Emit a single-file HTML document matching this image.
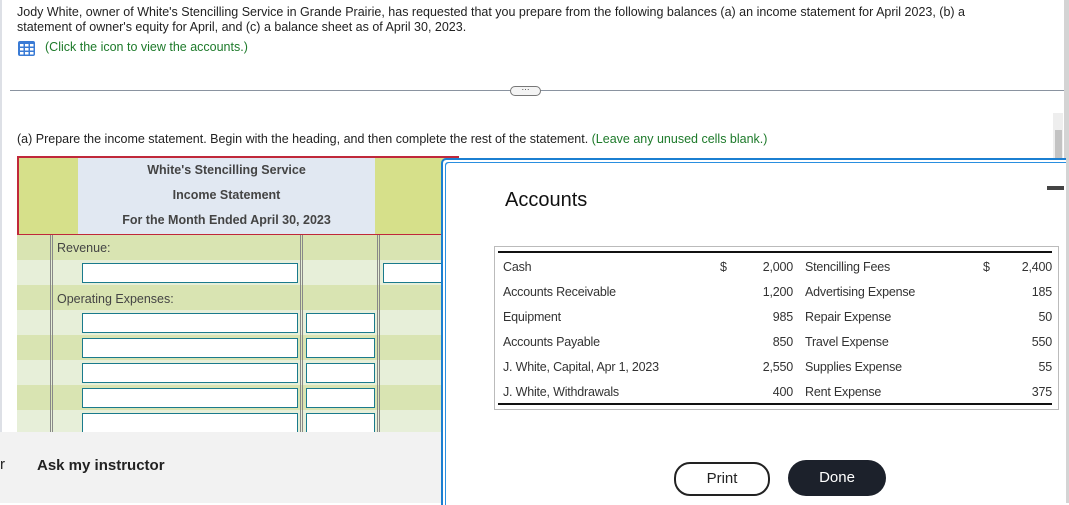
<!DOCTYPE html>
<html><head><style>
body{margin:0;width:1069px;height:503px;overflow:hidden;background:#fff;font-family:"Liberation Sans",Arial,sans-serif;position:relative;color:#222}
.a{position:absolute}
.row{position:absolute;left:17px;width:430px;height:25px}
.d{background:#d9e4b2}.l{background:#e7efd9}
.inp{position:absolute;height:18px;border:1px solid #1a7a8c;background:#fff}
.vl{position:absolute;top:235px;height:197px;width:1px;border-left:1px solid #888;border-right:1px solid #888}
.acc td{font-size:12.5px;color:#333;height:25px;padding:0;letter-spacing:-0.2px}
</style></head><body>
<div class="a" style="left:0;top:0;width:2px;height:432px;background:#dde0e6"></div>
<div class="a" style="left:17px;top:5px;font-size:12.5px;line-height:15px;width:1000px">Jody White, owner of White's Stencilling Service in Grande Prairie, has requested that you prepare from the following balances (a) an income statement for April 2023, (b) a statement of owner's equity for April, and (c) a balance sheet as of April 30, 2023.</div>
<svg class="a" style="left:18px;top:41px" width="17" height="15"><rect width="17" height="15" rx="2" fill="#3a7bd5"/><g fill="#fff"><rect x="2" y="3" width="3.5" height="2.5"/><rect x="7" y="3" width="3.5" height="2.5"/><rect x="12" y="3" width="3.5" height="2.5"/><rect x="2" y="7" width="3.5" height="2.5"/><rect x="7" y="7" width="3.5" height="2.5"/><rect x="12" y="7" width="3.5" height="2.5"/><rect x="2" y="11" width="3.5" height="2.5"/><rect x="7" y="11" width="3.5" height="2.5"/><rect x="12" y="11" width="3.5" height="2.5"/></g></svg>
<div class="a" style="left:45px;top:40px;font-size:12.5px;color:#1d7a2a">(Click the icon to view the accounts.)</div>
<div class="a" style="left:10px;top:90px;width:1055px;height:1px;background:#8a93a0"></div>
<div class="a" style="left:510px;top:86px;width:29px;height:8px;border:1px solid #777;border-radius:5px;background:#f4f4f4;font-size:8px;line-height:6px;text-align:center">···</div>
<div class="a" style="left:1053px;top:113px;width:10px;height:320px;background:#eee"></div>
<div class="a" style="left:1055px;top:130px;width:7px;height:30px;background:#c3c3c3"></div>
<div class="a" style="left:1064px;top:0;width:5px;height:503px;background:#d4d4d4"></div>
<div class="a" style="left:17px;top:132px;font-size:12.5px">(a) Prepare the income statement. Begin with the heading, and then complete the rest of the statement. <span style="color:#1d7a2a">(Leave any unused cells blank.)</span></div>
<div class="a" style="left:17px;top:156px;width:440px;height:76px;border:2px solid #c0283a;border-right:none;background:#d6e08a"></div>
<div class="a" style="left:78px;top:158px;width:297px;height:76px;background:#e1e8f2;text-align:center;font-weight:bold;font-size:12.5px;color:#444;line-height:25px">White's Stencilling Service<br>Income Statement<br>For the Month Ended April 30, 2023</div>
<div class="row d" style="top:235px"></div><div class="row l" style="top:260px"></div>
<div class="row d" style="top:285px"></div><div class="row l" style="top:310px"></div>
<div class="row d" style="top:335px"></div><div class="row l" style="top:360px"></div>
<div class="row d" style="top:385px"></div><div class="row l" style="top:410px;height:22px"></div>
<div class="vl" style="left:50px"></div><div class="vl" style="left:300px"></div><div class="vl" style="left:377px"></div>
<div class="a" style="left:57px;top:241px;font-size:12.5px;color:#444">Revenue:</div>
<div class="a" style="left:57px;top:292px;font-size:12.5px;color:#444">Operating Expenses:</div>
<div class="inp" style="left:82px;top:263px;width:214px"></div><div class="inp" style="left:383px;top:263px;width:60px"></div>
<div class="inp" style="left:82px;top:313px;width:214px"></div><div class="inp" style="left:306px;top:313px;width:67px"></div>
<div class="inp" style="left:82px;top:338px;width:214px"></div><div class="inp" style="left:306px;top:338px;width:67px"></div>
<div class="inp" style="left:82px;top:363px;width:214px"></div><div class="inp" style="left:306px;top:363px;width:67px"></div>
<div class="inp" style="left:82px;top:388px;width:214px"></div><div class="inp" style="left:306px;top:388px;width:67px"></div>
<div class="inp" style="left:82px;top:413px;width:214px;height:19px;border-bottom:none"></div><div class="inp" style="left:306px;top:413px;width:67px;height:19px;border-bottom:none"></div>
<div class="a" style="left:0;top:432px;width:441px;height:71px;background:#f2f2f2"></div>
<div class="a" style="left:0;top:456px;font-size:15px;color:#222">r</div>
<div class="a" style="left:37px;top:457px;font-size:15px;font-weight:bold;color:#222">Ask my instructor</div>
<div class="a" style="left:441px;top:158px;width:623px;height:345px;background:#fff;border-left:2px solid #1b7fd1;border-top:2px solid #1b7fd1;border-top-left-radius:5px;box-shadow:inset 2px 2px 0 #fff,inset 3px 3px 0 #2a8fe0"></div>
<div class="a" style="left:1047px;top:186px;width:17px;height:4px;background:#444"></div>
<div class="a" style="left:505px;top:189px;font-size:20px;color:#111">Accounts</div>
<div class="a" style="left:494px;top:246px;width:563px;height:162px;border:1px solid #bbb"></div>
<div class="a" style="left:498px;top:251px;width:554px;border-top:2px solid #111;border-bottom:2px solid #111;height:150px">
<table class="acc" style="border-collapse:collapse;width:554px;margin-top:1px;table-layout:fixed">
<col style="width:222px"><col style="width:20px"><col style="width:53px"><col style="width:190px"><col style="width:18px"><col style="width:51px">
<tr><td style="padding-left:5px">Cash</td><td>$</td><td style="text-align:right">2,000</td><td style="padding-left:12px">Stencilling Fees</td><td>$</td><td style="text-align:right">2,400</td></tr>
<tr><td style="padding-left:5px">Accounts Receivable</td><td></td><td style="text-align:right">1,200</td><td style="padding-left:12px">Advertising Expense</td><td></td><td style="text-align:right">185</td></tr>
<tr><td style="padding-left:5px">Equipment</td><td></td><td style="text-align:right">985</td><td style="padding-left:12px">Repair Expense</td><td></td><td style="text-align:right">50</td></tr>
<tr><td style="padding-left:5px">Accounts Payable</td><td></td><td style="text-align:right">850</td><td style="padding-left:12px">Travel Expense</td><td></td><td style="text-align:right">550</td></tr>
<tr><td style="padding-left:5px">J. White, Capital, Apr 1, 2023</td><td></td><td style="text-align:right">2,550</td><td style="padding-left:12px">Supplies Expense</td><td></td><td style="text-align:right">55</td></tr>
<tr><td style="padding-left:5px">J. White, Withdrawals</td><td></td><td style="text-align:right">400</td><td style="padding-left:12px">Rent Expense</td><td></td><td style="text-align:right">375</td></tr>
</table></div>
<div class="a" style="left:674px;top:462px;width:92px;height:30px;border:2px solid #222;border-radius:16px;text-align:center;line-height:30px;font-size:15px;color:#222">Print</div>
<div class="a" style="left:788px;top:460px;width:98px;height:36px;background:#1c212b;border-radius:18px;text-align:center;line-height:35px;font-size:15px;color:#fff">Done</div>
</body></html>
